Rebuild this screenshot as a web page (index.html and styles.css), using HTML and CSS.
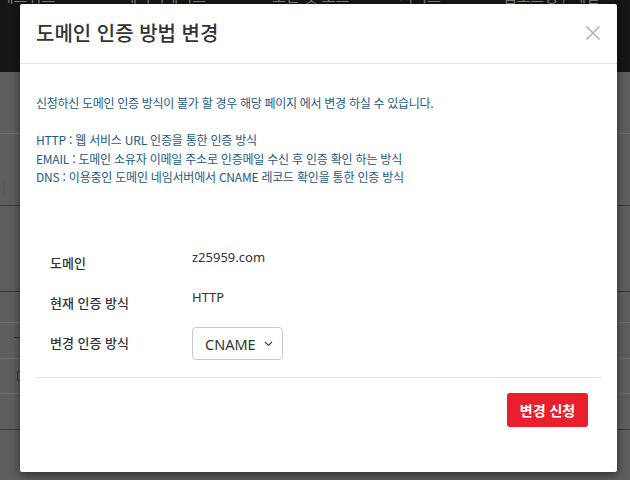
FILE: index.html
```html
<!DOCTYPE html>
<html lang="ko">
<head>
<meta charset="utf-8">
<link rel="stylesheet" href="styles.css">
</head>
<body>
<div class="page">
  <div class="topbar">
    <span>네트워크</span><span>데이터베이스</span><span>보안 및 로그</span><span>서비스</span><span>웹호스팅 / 메일</span>
  </div>
  <div class="rows">
    <div class="row r1"></div>
    <div class="row r2"><span class="frag">|</span></div>
    <div class="row r3 dark"></div>
    <div class="row r4"></div>
    <div class="row r5"><span class="frag">ㅡ</span></div>
    <div class="row r6"><span class="frag box"></span></div>
    <div class="row r7 dark"></div>
  </div>
</div>

<div class="modal">
  <div class="modal-header">
    <h1 class="modal-title">도메인 인증 방법 변경</h1>
    <button class="close" type="button" aria-label="닫기">
      <svg width="16" height="16" viewBox="0 0 16 16"><path d="M1.5 1.5 L14.5 14.5 M14.5 1.5 L1.5 14.5" stroke="#b3b3b3" stroke-width="1.6" fill="none"/></svg>
    </button>
  </div>
  <div class="modal-body">
    <p class="info"><span class="lead">신청하신 도메인 인증 방식이 불가 할 경우 해당 페이지 에서 변경 하실 수 있습니다.</span><br><br><span class="item">HTTP : 웹 서비스 URL 인증을 통한 인증 방식</span><br><span class="item">EMAIL : 도메인 소유자 이메일 주소로 인증메일 수신 후 인증 확인 하는 방식</span><br><span class="item">DNS : 이용중인 도메인 네임서버에서 CNAME 레코드 확인을 통한 인증 방식</span></p>
    <div class="form">
      <div class="label">도메인</div><div class="value">z25959.com</div>
      <div class="label">현재 인증 방식</div><div class="value">HTTP</div>
      <div class="label">변경 인증 방식</div>
      <div class="control">
        <div class="select"><span>CNAME</span>
          <svg width="9" height="6" viewBox="0 0 9 6"><path d="M1 1 L4.5 4.5 L8 1" stroke="#444" stroke-width="1.2" fill="none"/></svg>
        </div>
      </div>
    </div>
  </div>
  <div class="modal-footer">
    <button class="submit" type="button">변경 신청</button>
  </div>
</div>
</body>
</html>
```
FILE: styles.css
```css
* { box-sizing: border-box; }
html, body { margin: 0; padding: 0; }
body {
  width: 630px;
  height: 480px;
  overflow: hidden;
  background: #5d5d5d;
  font-family: "Noto Sans CJK KR", "Noto Sans", sans-serif;
}
.page { width: 630px; height: 480px; }
.topbar {
  height: 72px;
  background: #161616;
  display: flex;
  overflow: hidden;
}
.topbar span {
  flex-shrink: 0;
  white-space: nowrap;
  color: #7c7c7c;
  font-size: 15px;
  line-height: 16px;
  margin-top: -12px;
  height: 16px;
}
.topbar span:nth-child(1) { margin-left: 0; }
.topbar span:nth-child(2) { margin-left: 68px; }
.topbar span:nth-child(3) { margin-left: 66px; }
.topbar span:nth-child(4) { margin-left: 50px; }
.topbar span:nth-child(5) { margin-left: 62px; }
.rows { display: flex; flex-direction: column; }
.row {
  border-bottom: 1px solid #6c6c6c;
  position: relative;
}
.row.dark { border-bottom-color: #3a3a3a; }
.r1 { height: 62px; }
.r2 { height: 72px; border-bottom-color: #3a3a3a; }
.r3 { height: 86px; }
.r4 { height: 31px; }
.r5 { height: 36px; }
.r6 { height: 35px; }
.r7 { height: 36px; }
.frag { color: #3a3a3a; font-size: 14px; margin-left: 2px; }
.r2 .frag { display: block; padding-top: 42px; color: #555; }
.r5 .frag { display: block; padding-top: 6px; margin-left: 14px; font-size: 12px; color: #222; }
.frag.box { display: block; width: 8px; height: 10px; border: 1px solid #333; margin: 12px 0 0 17px; }

.modal {
  position: absolute;
  left: 20px;
  top: 4px;
  width: 597px;
  height: 468px;
  background: #fff;
  border-radius: 2px;
  box-shadow: 0 3px 9px rgba(0,0,0,0.5);
  display: flex;
  flex-direction: column;
}
.modal-header {
  height: 60px;
  border-bottom: 1px solid #e2e2e2;
  display: flex;
  align-items: center;
  justify-content: space-between;
  padding: 0 16px 2px 16px;
}
.modal-title {
  margin: 0;
  font-size: 20px;
  font-weight: 500;
  color: #333;
}
.close {
  border: 0;
  background: none;
  padding: 0;
  width: 16px;
  height: 16px;
  display: flex;
  margin-top: 1px;
}
.modal-body {
  padding: 30px 15px 0 16px;
}
.info {
  margin: 0;
  font-size: 12px;
  line-height: 18.5px;
  color: #1d5a85;
}
.lead { letter-spacing: -0.3px; }
.item { letter-spacing: -0.22px; }
.form {
  margin-top: 56px;
  display: grid;
  grid-template-columns: 142px 1fr;
  grid-auto-rows: 40px;
  padding: 0 0 14px 14px;
  border-bottom: 1px solid #e3e3e3;
}
.label {
  align-self: center;
  font-size: 13px;
  font-weight: 500;
  color: #333;
}
.value {
  align-self: center;
  font-size: 13px;
  color: #333;
  margin-bottom: 12px;
  font-family: "Noto Sans", sans-serif;
}
.control { align-self: center; margin-top: 2px; }
.select {
  width: 91px;
  height: 33px;
  border: 1px solid #c9c9c9;
  border-radius: 4px;
  display: flex;
  align-items: center;
  justify-content: space-between;
  padding: 1px 9px 0 12px;
  font-size: 14.5px;
  color: #333;
  font-family: "Noto Sans", sans-serif;
}
.modal-footer {
  display: flex;
  justify-content: flex-end;
  padding: 15px 29px 0 0;
}
.submit {
  width: 81px;
  height: 34px;
  border: 0;
  border-radius: 3px;
  background: #ea1f2d;
  color: #fff;
  font-family: "Noto Sans CJK KR", sans-serif;
  font-size: 14px;
  font-weight: 700;
  padding: 0;
}
```
